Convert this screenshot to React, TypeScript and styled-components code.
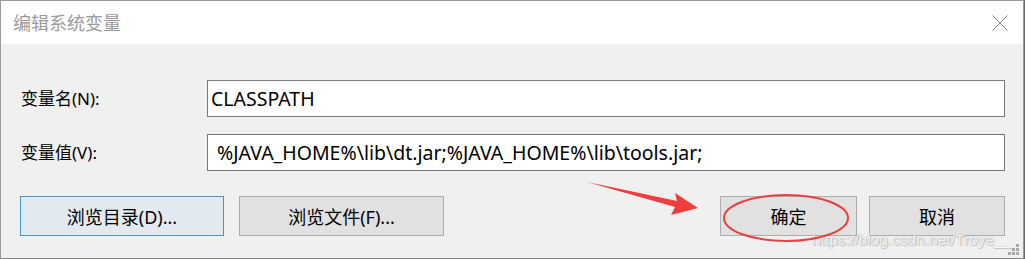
import React from 'react';
import styled, { createGlobalStyle } from 'styled-components';

const GlobalStyle = createGlobalStyle`
  html, body {
    margin: 0;
    padding: 0;
    background: #6b6b6b;
  }
  body {
    font-family: "Noto Sans", "Noto Sans CJK SC", sans-serif;
  }
`;

const Window = styled.div`
  position: relative;
  width: 1022px;
  height: 257px;
  background: #f0f0f0;
  border: 1px solid #9a9a9a;
  border-bottom-color: #888;
  display: flex;
  flex-direction: column;
  overflow: hidden;
`;

const TitleBar = styled.div`
  height: 43px;
  background: #ffffff;
  display: flex;
  align-items: center;
  justify-content: space-between;
  padding: 0 15px 0 12px;
  flex-shrink: 0;
`;

const Title = styled.span`
  font-family: "Noto Sans CJK SC", sans-serif;
  font-size: 18px;
  line-height: 20px;
  color: #9a9a9a;
  margin-top: -1px;
`;

const CloseButton = styled.div`
  width: 16px;
  height: 16px;
  display: flex;
  margin-top: 1px;
`;

const Body = styled.div`
  display: flex;
  flex-direction: column;
  padding: 37px 18px 0 19px;
`;

const Fields = styled.div`
  display: grid;
  grid-template-columns: 187px 1fr;
  row-gap: 18px;
  align-items: center;
`;

const Label = styled.label`
  font-family: "Noto Sans", "Noto Sans CJK SC", sans-serif;
  font-size: 17px;
  line-height: 20px;
  color: #000;
  padding-left: 1px;
`;

const Input = styled.div<{ $indent?: number }>`
  height: 35px;
  box-sizing: content-box;
  border: 1px solid #7a7a7a;
  background: #fff;
  display: flex;
  align-items: center;
  padding-left: ${(p) => p.$indent ?? 3}px;
  font-family: "Noto Sans", "Noto Sans CJK SC", sans-serif;
  font-size: 19.5px;
  color: #000;
  white-space: nowrap;
  margin-top: -1px;
`;

const ButtonRow = styled.div`
  display: flex;
  align-items: center;
  margin-top: 25px;
`;

const ButtonGroup = styled.div<{ $gap: number }>`
  display: flex;
  gap: ${(p) => p.$gap}px;
`;

const Spacer = styled.div`
  flex: 1;
`;

const Button = styled.div<{ $width: number; $focused?: boolean }>`
  width: ${(p) => p.$width}px;
  height: 38px;
  border: 1px solid ${(p) => (p.$focused ? '#4a90cf' : '#adadad')};
  background: ${(p) => (p.$focused ? '#e2e9f1' : '#e1e1e1')};
  display: flex;
  align-items: center;
  justify-content: center;
  font-family: "Noto Sans", "Noto Sans CJK SC", sans-serif;
  font-size: 18px;
  color: #000;
  box-sizing: content-box;
`;

const Overlay = styled.svg`
  position: absolute;
  left: 0;
  top: 0;
  pointer-events: none;
`;

const Watermark = styled.span`
  position: absolute;
  left: 811px;
  top: 230px;
  font-family: "Liberation Sans", Arial, sans-serif;
  font-size: 15.5px;
  line-height: 18px;
  color: rgba(255, 255, 255, 0.92);
  text-shadow: 0 0 1px rgba(90, 90, 90, 0.55), 1px 1px 1px rgba(120, 120, 120, 0.35);
`;

const Grip = styled.svg`
  position: absolute;
  right: 3px;
  bottom: 2px;
`;

export default function App() {
  return (
    <>
      <GlobalStyle />
      <Window>
        <TitleBar>
          <Title>编辑系统变量</Title>
          <CloseButton>
            <svg width="16" height="16" viewBox="0 0 16 16">
              <path d="M0.5 0.5 L15.5 15.5 M15.5 0.5 L0.5 15.5" stroke="#8a8a8a" strokeWidth="1" fill="none" />
            </svg>
          </CloseButton>
        </TitleBar>
        <Body>
          <Fields>
            <Label>变量名(N):</Label>
            <Input>CLASSPATH</Input>
            <Label>变量值(V):</Label>
            <Input $indent={9}>%JAVA_HOME%\lib\dt.jar;%JAVA_HOME%\lib\tools.jar;</Input>
          </Fields>
          <ButtonRow>
            <ButtonGroup $gap={15}>
              <Button $width={202} $focused>浏览目录(D)...</Button>
              <Button $width={203}>浏览文件(F)...</Button>
            </ButtonGroup>
            <Spacer />
            <ButtonGroup $gap={12}>
              <Button $width={135}>确定</Button>
              <Button $width={134}>取消</Button>
            </ButtonGroup>
          </ButtonRow>
        </Body>
        <Watermark>https://blog.csdn.net/Troye__</Watermark>
        <Grip width="12" height="12" viewBox="0 0 12 12">
          {[
            [8, 0],
            [4, 4],
            [8, 4],
            [0, 8],
            [4, 8],
            [8, 8],
          ].map(([x, y]) => (
            <rect key={`${x}-${y}`} x={x} y={y} width="3" height="3" fill="#a8a8a8" />
          ))}
        </Grip>
        <Overlay width="1022" height="257" viewBox="0 0 1022 257">
          <path
            d="M586 181 L676 200 L674 192 L697 207 L670 214 L674 206 Z"
            fill="#f03c3c"
          />
          <ellipse cx="785" cy="217" rx="62" ry="23" fill="none" stroke="#e8403f" strokeWidth="2" />
        </Overlay>
      </Window>
    </>
  );
}
